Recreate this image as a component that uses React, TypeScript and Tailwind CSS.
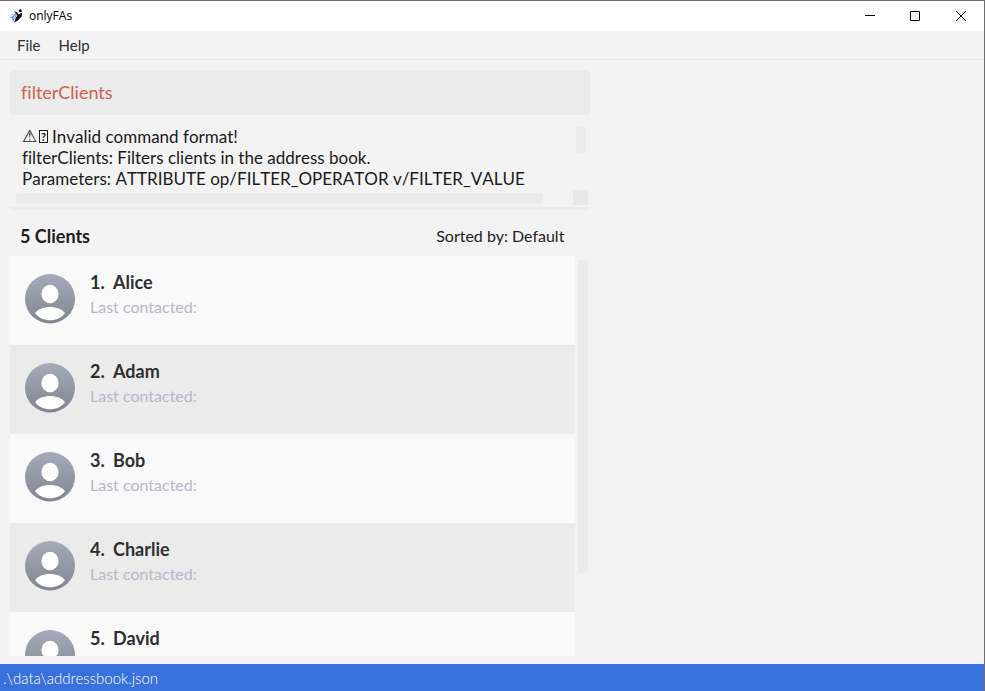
const clients = ["Alice", "Adam", "Bob", "Charlie", "David"];

function AppLogo() {
  return (
    <svg viewBox="0 0 14 14" className="h-3.5 w-3.5" aria-hidden="true">
      <circle cx="11.3" cy="1.7" r="1.5" fill="#000" />
      <path d="M5 2.2 8 3.2 9.6 5.4 13.2 3.4 12.6 7.4 9 11.4 5.2 13.2 6.6 9.6 8.2 6.4Z" fill="#0b1020" />
      <path d="M6.8 3.6 7.8 6.6 5.6 10.4 3.8 13 3.2 9.6 0.2 8.6 3.6 7.2Z" fill="#6d9bd0" />
      <path d="M4.2 5 2 6 3.4 6.4Z" fill="#4d7fb8" />
      <path d="M4.6 8.2 6.6 5.6 6 8.8 4.6 10.6Z" fill="#c3d9ef" />
    </svg>
  );
}

function Avatar({ id }: { id: string }) {
  return (
    <svg viewBox="0 0 50 50" className="h-[50px] w-[50px] shrink-0" aria-hidden="true">
      <defs>
        <linearGradient id={id} x1="0" y1="0" x2="0" y2="1">
          <stop offset="0" stopColor="#a5abb9" />
          <stop offset="1" stopColor="#81858f" />
        </linearGradient>
      </defs>
      <ellipse cx="25" cy="24.7" rx="25" ry="24.7" fill={`url(#${id})`} />
      <ellipse cx="25" cy="20" rx="8.6" ry="9.2" fill="#fff" />
      <path d="M10 39.2C13 35.2 18.5 33 25 33S37 35.2 40 39.2C36.5 43.8 31 46.2 25 46.2S13.5 43.8 10 39.2Z" fill="#fff" />
    </svg>
  );
}

function TitleBar() {
  return (
    <header className="flex h-[30px] shrink-0 items-center bg-white pl-[9px]">
      <AppLogo />
      <h1 className="ml-1.5 font-['Open_Sans',sans-serif] text-[12px] leading-4 text-black">onlyFAs</h1>
      <div className="ml-auto flex h-full">
        <button type="button" aria-label="Minimize" className="flex w-11 items-center justify-center">
          <svg viewBox="0 0 10 10" className="h-2.5 w-2.5" shapeRendering="crispEdges"><path d="M0 4h10v1H0z" /></svg>
        </button>
        <button type="button" aria-label="Maximize" className="flex w-[46px] items-center justify-center">
          <svg viewBox="0 0 10 10" className="h-2.5 w-2.5" fill="none" stroke="#000"><path d="M.5 .5h9v9h-9z" /></svg>
        </button>
        <button type="button" aria-label="Close" className="flex w-[46px] items-center justify-center">
          <svg viewBox="0 0 10 10" className="h-2.5 w-2.5" fill="none" stroke="#000"><path d="M0 0 10 10M10 0 0 10" /></svg>
        </button>
      </div>
    </header>
  );
}

function ResultDisplay() {
  return (
    <section aria-label="Result" className="relative h-[95px] shrink-0 border-b-[3px] border-[#ebebeb] pt-[11px] pl-3 text-[17px] leading-[21px] whitespace-nowrap text-[#1a1a1a] [font-kerning:none]">
      <p className="flex items-center">
        <span className="w-[17px] font-['DejaVu_Sans',sans-serif] text-[17px]">⚠</span>
        <span className="mr-1 flex h-[13px] w-[9px] items-center justify-center border border-[#1a1a1a] text-[11px] font-bold leading-none">?</span>
        Invalid command format!
      </p>
      <p>filterClients: Filters clients in the address book.</p>
      <p>Parameters: ATTRIBUTE op/FILTER_OPERATOR v/FILTER_VALUE</p>
      <span className="absolute top-[11px] right-1 h-[27px] w-2.5 rounded-[3px] bg-[#ebebeb]" />
      <span className="absolute right-[47px] bottom-1 left-1.5 h-2.5 rounded-[3px] bg-[#ebebeb]" />
      <span className="absolute right-0.5 bottom-0.5 h-[15px] w-[15px] bg-[#e8e8e8]" />
    </section>
  );
}

function ClientList() {
  return (
    <div className="flex min-h-0 flex-1">
      <ol className="min-w-0 flex-1 overflow-y-auto [scrollbar-width:none]">
        {clients.map((name, i) => (
          <li key={name} className="flex h-[89px] gap-[15px] bg-[#f9f9f9] px-[15px] pt-[18px] even:bg-[#ebebeb]">
            <Avatar id={`avatar-${i}`} />
            <div className="-mt-1">
              <h3 className="flex text-[18px] leading-[25px] font-bold text-[#2f2f2f]">
                <span className="w-[23px]">{i + 1}.</span>
                {name}
              </h3>
              <p className="text-[16px] leading-[24px] text-[#b9b6c6]">Last contacted:</p>
            </div>
          </li>
        ))}
      </ol>
      <div className="w-[15px] pt-1 pl-[3px]">
        <div className="h-[79%] w-2.5 rounded-[3px] bg-[#ebebeb]" />
      </div>
    </div>
  );
}

export default function App() {
  return (
    <div className="flex h-screen flex-col overflow-hidden border-t border-r border-[#6d6d6d] bg-[#f3f3f3] font-[Lato,sans-serif] [font-variant-ligatures:none]">
      <TitleBar />
      <nav className="flex h-[29px] shrink-0 items-center gap-[18px] border-b border-[#e8e8e8] pl-[17px] text-[15px] text-[#2f2f2f]">
        <button type="button">File</button>
        <button type="button">Help</button>
      </nav>
      <main className="flex min-h-0 w-3/5 flex-1 flex-col pt-2.5 pb-2 pl-2.5">
        <input
          aria-label="Command"
          defaultValue="filterClients"
          spellCheck={false}
          className="h-[45px] w-full shrink-0 rounded-[3px] bg-[#ebebeb] px-[11px] pb-0.5 text-[18px] text-[#d0604f] outline-none"
        />
        <ResultDisplay />
        <div className="flex h-[46px] shrink-0 items-center justify-between pt-1.5 pr-[26px] pl-2.5 text-[#1f2020]">
          <h2 className="text-[18px] leading-6 font-bold">5 Clients</h2>
          <span className="text-[16px] leading-[22px]">Sorted by: Default</span>
        </div>
        <ClientList />
      </main>
      <footer className="flex h-[27px] shrink-0 items-center bg-[#3871dc] pt-0.5 pl-[3px] text-[15px] font-light text-white">
        .\data\addressbook.json
      </footer>
    </div>
  );
}
